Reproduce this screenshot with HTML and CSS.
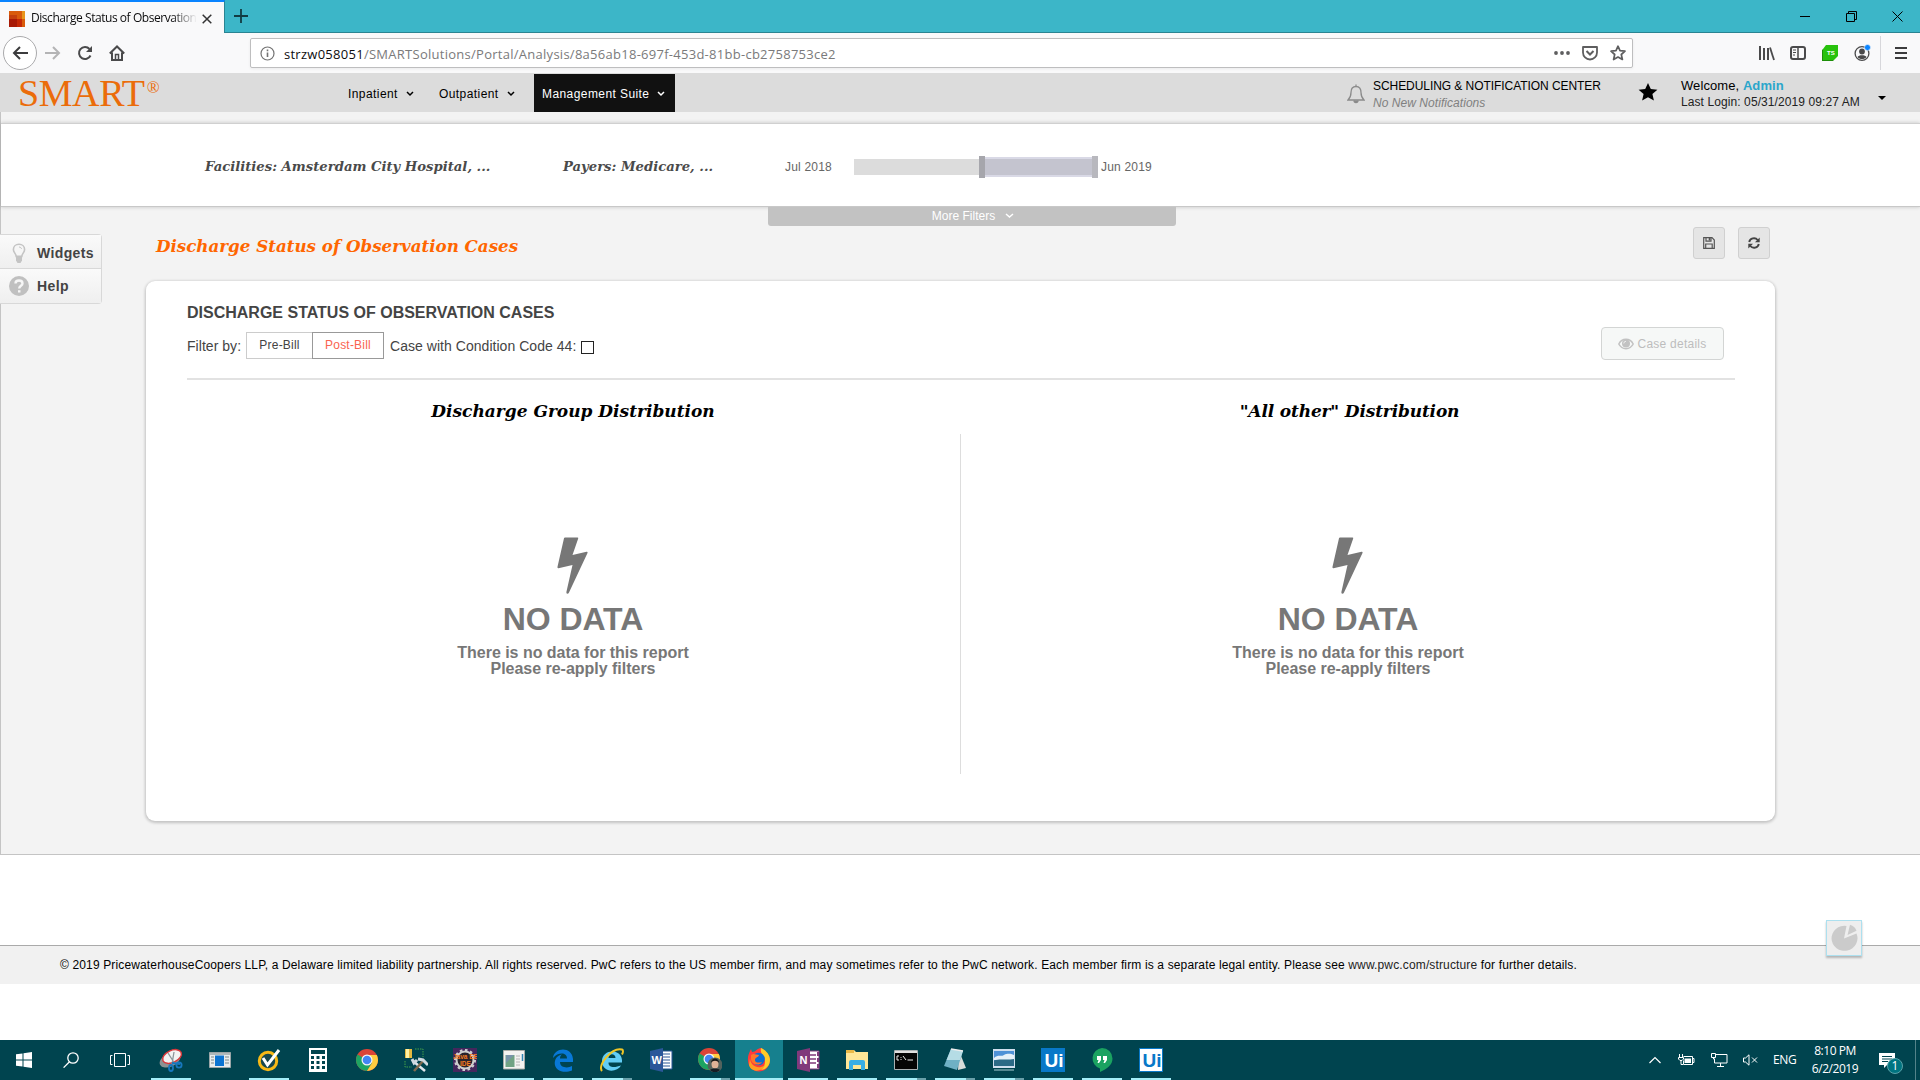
FILE: index.html
```html
<!DOCTYPE html>
<html lang="en">
<head>
<meta charset="utf-8">
<title>Discharge Status of Observation Cases</title>
<link rel="stylesheet" href="styles.css">
</head>
<body>
<header class="browser">
  <div class="tabstrip">
    <div class="tab">
      <svg class="favicon" width="16" height="16" viewBox="0 0 16 16"><path fill="#d95b0b" d="M0 0h16v16H0z"/><path fill="#e8941a" d="M13 0h3v8h-3z"/><path fill="#c5400c" d="M0 4h8v5H0z"/><path fill="#a81a06" d="M0 8h8v8H0z"/><path fill="#c42806" d="M8 8h5v8H8z"/></svg>
      <span class="tab-title">Discharge Status of Observation</span>
      <svg class="tab-close" width="10" height="10" viewBox="0 0 10 10"><path d="M.7.7l8.600 8.600M9.300.7L.7 9.300" stroke="#333" stroke-width="1.500"/></svg>
    </div>
    <svg class="tab-new" width="14" height="14" viewBox="0 0 14 14"><path d="M7 0v14M0 7h14" stroke="#123c42" stroke-width="1.800"/></svg>
    <div class="window-controls">
      <svg width="11" height="11" viewBox="0 0 11 11"><path d="M0 5.500h10" stroke="#000"/></svg>
      <svg width="11" height="11" viewBox="0 0 11 11" fill="none" stroke="#000"><path d="M.5 2.500h8v8h-8zM2.500 2V.5h8v8H9"/></svg>
      <svg width="11" height="11" viewBox="0 0 11 11"><path d="M.5.5l10 10M10.500.5l-10 10" stroke="#000"/></svg>
    </div>
  </div>
  <div class="toolbar">
    <div class="nav-buttons">
      <span class="back"><svg width="16" height="14" viewBox="0 0 16 14" fill="none" stroke="#3c3c3d" stroke-width="2"><path d="M16 7H2M8 1L2 7l6 6"/></svg></span>
      <svg width="16" height="14" viewBox="0 0 16 14" fill="none" stroke="#b4b4b5" stroke-width="2"><path d="M0 7h14M8 1l6 6-6 6"/></svg>
      <svg width="16" height="16" viewBox="0 0 16 16" fill="none" stroke="#4a4a4b" stroke-width="2"><path d="M13.500 10.500A6 6 0 1 1 12.500 4"/><path d="M15 1v6H9z" fill="#4a4a4b" stroke="none"/></svg>
      <svg width="16" height="16" viewBox="0 0 16 16" fill="none" stroke="#4a4a4b" stroke-width="2"><path d="M.8 8.500L8 1.500l7.200 7M3 7.500V15h10V7.500"/><path d="M6.500 15V9.500h3V15" stroke-width="1.500"/></svg>
    </div>
    <div class="urlbar">
      <svg width="15" height="15" viewBox="0 0 15 15" fill="none" stroke="#737373"><circle cx="7.500" cy="7.500" r="6.500" stroke-width="1.200"/><path d="M7.500 6.500V11M7.500 3.600v1.700" stroke-width="1.600"/></svg>
      <span class="url"><b>strzw058051</b>/SMARTSolutions/Portal/Analysis/8a56ab18-697f-453d-81bb-cb2758753ce2</span>
      <svg width="16" height="16" viewBox="0 0 16 16" fill="#5e5e5f"><circle cx="2" cy="8" r="1.900"/><circle cx="8" cy="8" r="1.900"/><circle cx="14" cy="8" r="1.900"/></svg>
      <svg width="16" height="16" viewBox="0 0 16 16" fill="none" stroke="#5e5e5f" stroke-width="1.800"><path d="M1 2h14v5.500a7 7 0 0 1-14 0z" stroke-linejoin="round"/><path d="M4.500 6L8 9.500 11.500 6" stroke-width="2"/></svg>
      <svg width="16" height="16" viewBox="0 0 16 16" fill="none" stroke="#5e5e5f" stroke-width="1.700"><path d="M8 1.200l2 4.500 5 .5-3.700 3.300 1.100 5L8 12l-4.400 2.500 1.100-5L1 6.200l5-.5z" stroke-linejoin="round"/></svg>
    </div>
    <div class="tools">
      <svg width="16" height="16" viewBox="0 0 16 16" fill="none" stroke="#4a4a4b" stroke-width="2"><path d="M1 1v14M5 3v12M9 3v12"/><path d="M11 2.500L15 15" stroke-width="1.800"/></svg>
      <svg width="16" height="16" viewBox="0 0 16 16" fill="none" stroke="#4a4a4b" stroke-width="2"><rect x="1" y="2" width="14" height="12" rx="2"/><path d="M8 2v12" stroke-width="1.500"/><path d="M3 5h3M3 7.500h3M3 10h2" stroke-width="1"/></svg>
      <svg width="16" height="16" viewBox="0 0 16 16"><path fill="#1d8f08" d="M0 4v12h12z"/><path fill="#28c20d" d="M4 0h12v11l-4 4H1V4z"/><text class="ts-mark" x="5" y="10" fill="#fff">TS</text></svg>
      <svg width="18" height="18" viewBox="0 0 18 18"><circle cx="8" cy="9.500" r="6.900" fill="none" stroke="#4a4a4b" stroke-width="1.300"/><circle cx="8" cy="7.500" r="2.900" fill="#4a4a4b"/><path fill="#4a4a4b" d="M3.500 13c1-2.500 8-2.500 9 0-2 2.800-7 2.800-9 0z"/><circle cx="13.500" cy="3.500" r="3" fill="#0a84ff" stroke="#f9f9fa" stroke-width=".6"/></svg>
      <i class="tool-sep"></i>
      <svg width="12" height="14" viewBox="0 0 12 14" stroke="#3c3c3d" stroke-width="2"><path d="M0 2h12M0 7h12M0 12h12"/></svg>
    </div>
  </div>
</header>

<div class="page">
  <header class="appbar">
    <div class="logo">SMART<sup>®</sup></div>
    <nav class="menu">
      <a class="m1">Inpatient <svg width="8" height="6" viewBox="0 0 8 6"><path d="M1 1l3 3 3-3"/></svg></a>
      <a class="m2">Outpatient <svg width="8" height="6" viewBox="0 0 8 6"><path d="M1 1l3 3 3-3"/></svg></a>
      <a class="m3 active">Management Suite <svg width="8" height="6" viewBox="0 0 8 6"><path d="M1 1l3 3 3-3"/></svg></a>
    </nav>
    <div class="notify">
      <svg width="18" height="20" viewBox="0 0 18 20" fill="none" stroke="#8a8a8a" stroke-width="1.300"><path d="M9 2.500c-3.500 0-5 2.500-5 6 0 4-1 5.500-3 7.500h16c-2-2-3-3.500-3-7.500 0-3.500-1.500-6-5-6zM9 .5v2"/><path d="M7 16.500a2 2 0 0 0 4 0" fill="#8a8a8a"/></svg>
      <div><p class="sched">SCHEDULING &amp; NOTIFICATION CENTER</p><p class="none">No New Notifications</p></div>
    </div>
    <svg class="star" width="20" height="18" viewBox="0 0 20 18"><path d="M10 0l2.800 6 6.600.7-5 4.400 1.500 6.500L10 14.300l-5.900 3.300 1.500-6.500-5-4.400L7.200 6z"/></svg>
    <div class="user"><p class="welcome">Welcome, <b>Admin</b></p><p class="last">Last Login: 05/31/2019 09:27 AM</p></div>
    <i class="caret"></i>
  </header>

  <section class="filters">
    <span class="facilities">Facilities: Amsterdam City Hospital, ...</span>
    <span class="payers">Payers: Medicare, ...</span>
    <span class="from">Jul 2018</span>
    <div class="range"><i class="track"></i><i class="handle left"></i><i class="selected"></i><i class="handle right"></i></div>
    <span class="to">Jun 2019</span>
  </section>
  <div class="more">More Filters <svg width="9" height="6" viewBox="0 0 9 6"><path d="M1 1l3.500 3L8 1"/></svg></div>

  <div class="workspace">
    <aside class="side">
      <a><svg width="20" height="20" viewBox="0 0 20 20"><path d="M10 1.200c-3.300 0-5.600 2.300-5.600 5.200 0 3 2.600 4.200 2.800 7h5.600c.2-2.800 2.800-4 2.800-7 0-2.900-2.300-5.200-5.600-5.200z" fill="#f6f6f6" stroke="#c4c4c4" stroke-width="1.600"/><path d="M7 13.500h6v4L11.500 20h-3L7 17.500z" fill="#c4c4c4"/><path d="M10 4c1.500 0 2.500 1 2.500 2" fill="none" stroke="#c4c4c4"/></svg>Widgets</a>
      <a><svg width="20" height="20" viewBox="0 0 20 20"><circle cx="10" cy="10" r="10" fill="#c0c0c0"/><path d="M6.500 7.500C6.500 3.500 13.500 3.500 13.500 7.500c0 2.300-3.300 2.300-3.300 5" fill="none" stroke="#f6f6f6" stroke-width="2.400"/><path d="M9 14.200h2.500v2.300H9z" fill="#f6f6f6"/></svg>Help</a>
    </aside>
    <main class="content">
      <div class="titlebar">
        <h1>Discharge Status of Observation Cases</h1>
        <button class="square"><svg width="12" height="12" viewBox="0 0 12 12" fill="none" stroke="#555" stroke-width="1.200"><path d="M.7.7h8.300l2.300 2.300v8.300H.7zM2.700 11V7h6.500v4M3 .7v3.500h5V.7"/><path d="M5.700 1h1.600v2.500H5.700z" fill="#555" stroke="none"/></svg></button>
        <button class="square"><svg width="12" height="12" viewBox="0 0 12 12" fill="none" stroke="#444" stroke-width="1.900"><path d="M1.200 5A4.800 4.600 0 0 1 9.700 3M10.800 7A4.800 4.600 0 0 1 2.300 9"/><path d="M11.700.5v4.700H7zM.3 11.500V6.800H5z" fill="#444" stroke="none"/></svg></button>
      </div>
      <section class="card">
        <h2>DISCHARGE STATUS OF OBSERVATION CASES</h2>
        <div class="controls">
          <span class="by">Filter by:</span>
          <button class="bill pre">Pre-Bill</button><button class="bill post">Post-Bill</button>
          <label>Case with Condition Code 44:</label><i class="check"></i>
          <button class="details"><svg width="16" height="12" viewBox="0 0 16 12"><path d="M.8 6C4-.2 12-.2 15.200 6 12 12.200 4 12.200.8 6z" fill="none" stroke="#c2c2c2" stroke-width="1.500"/><circle cx="8" cy="5.500" r="4" fill="#c2c2c2"/><path d="M5.800 5.500A2.200 2.200 0 0 1 8 3.300" stroke="#eee" fill="none"/></svg>Case details</button>
        </div>
        <div class="charts">
          <article>
            <h3 class="group">Discharge Group Distribution</h3>
            <div class="empty"><svg width="32" height="57" viewBox="0 0 32 57"><path d="M8 .5h12.500q1 0 .7 1L15.500 18l14-3.300q1.500-.2 1 1.200L12 55.500q-.6 1.200-1.600 1.200-1.400-.2-1-1.700L15.500 28 1.500 31.200q-1.400.2-1-1.400L7 1.300Q7.200.5 8 .5z"/></svg><strong>NO DATA</strong><p>There is no data for this report<br>Please re-apply filters</p></div>
          </article>
          <article>
            <h3 class="other">"All other" Distribution</h3>
            <div class="empty"><svg width="32" height="57" viewBox="0 0 32 57"><path d="M8 .5h12.500q1 0 .7 1L15.500 18l14-3.300q1.500-.2 1 1.200L12 55.500q-.6 1.200-1.600 1.200-1.400-.2-1-1.700L15.500 28 1.500 31.200q-1.400.2-1-1.400L7 1.300Q7.200.5 8 .5z"/></svg><strong>NO DATA</strong><p>There is no data for this report<br>Please re-apply filters</p></div>
          </article>
        </div>
      </section>
    </main>
  </div>
</div>
<footer class="legal">© 2019 PricewaterhouseCoopers LLP, a Delaware limited liability partnership. All rights reserved. PwC refers to the US member firm, and may sometimes refer to the PwC network. Each member firm is a separate legal entity. Please see <a>www.pwc.com/structure</a> for further details.
  <div class="pie"><svg width="28" height="28" viewBox="0 0 28 28"><path d="M14 14.500L16.500 2A13 12.500 0 1 0 26.500 9.500z" fill="#cbcbcb"/><path d="M17.500 11L20 .8q5 1.500 6.500 6z" fill="#cbcbcb"/></svg></div>
</footer>

<footer class="taskbar">
  <div class="system">
    <svg width="16" height="16" viewBox="0 0 16 16" fill="#fff"><path d="M0 2.300l6.500-.9v6.100H0zM7.500 1.200L16 0v7.500H7.500zM0 8.500h6.500v6.100L0 13.700zM7.500 8.500H16V16l-8.500-1.200z"/></svg>
    <svg width="16" height="16" viewBox="0 0 16 16" fill="none" stroke="#fff" stroke-width="1.300"><circle cx="10" cy="6" r="5.200"/><path d="M6.500 9.800L.6 15.600"/></svg>
    <svg width="20" height="14" viewBox="0 0 20 14" fill="none" stroke="#fff"><path d="M4.500.5h11v13h-11zM2.500 2.500h-2v9h2M17.500 2.500h2v9h-2"/></svg>
  </div>
  <div class="apps">
    <span class="app run"><svg viewBox="0 0 24 24"><ellipse cx="11" cy="12" rx="11" ry="6.500" transform="rotate(-25 11 12)" fill="#8b9292"/><ellipse cx="13" cy="8.500" rx="10" ry="6" transform="rotate(-25 13 8.500)" fill="#f2f2f2" stroke="#d7373a" stroke-width="1.500"/><path d="M9 5l7 11M15 4l-2 12" stroke="#8a9599" stroke-width="1.300"/><g fill="none" stroke="#1777bd" stroke-width="1.800"><path d="M13 15l8 1"/><ellipse cx="12" cy="20" rx="2" ry="3"/><circle cx="20" cy="17" r="2.600"/></g></svg></span>
    <span class="app"><svg viewBox="0 0 24 24"><path d="M1.500 4.500h21v15h-21z" fill="#e9ecec" stroke="#9aa5a7"/><path d="M2 5h20v2H2z" fill="#aeb8ba"/><path d="M7 7.500h9V18H7z" fill="#0c74d1"/><path d="M3 9h3M3 12h3M3 15h3M17 9h4M17 12h4M17 15h4" stroke="#7b898b"/></svg></span>
    <span class="app run"><svg viewBox="0 0 24 24"><circle cx="11" cy="13" r="8.700" fill="#17484e" stroke="#f8b916" stroke-width="3"/><path d="M6 10l4.500 7L22 2" fill="none" stroke="#fff" stroke-width="3"/></svg></span>
    <span class="app"><svg viewBox="0 0 24 24"><path d="M3 0h18v24H3z" fill="#fff"/><path d="M5 2h14v4H5z" fill="#00444e"/><path d="M5 9.500h14M5 14.500h14M5 19.500h14" stroke="#00444e" stroke-width="3" stroke-dasharray="3 2.500"/></svg></span>
    <span class="app"><svg viewBox="0 0 24 24"><circle cx="12" cy="12" r="11" fill="#db4437"/><path d="M12 12L2.500 6.500A11 11 0 0 0 12 23l5-8z" fill="#1da462"/><path d="M12 7h9.800A11 11 0 0 1 12 23l5-8z" fill="#ffcd40"/><circle cx="12" cy="12" r="5.500" fill="#f5f5f5"/><circle cx="12" cy="12" r="4.300" fill="#4285f4"/></svg></span>
    <span class="app run"><svg viewBox="0 0 24 24"><path d="M1 1h7v9H1z" fill="#e4b941"/><path d="M2 1h3v9H2z" fill="#fff1a3"/><path d="M11 1h8v8M1 13v6h7" fill="none" stroke="#42a04b" stroke-dasharray="1.500 1"/><path d="M9 13l12 10" stroke="#dfe7ec" stroke-width="2.500"/><path d="M10 23l9-10" stroke="#7f6a4e" stroke-width="2.500"/><path d="M8 11l2 4 3-3M14 11l5 1 5 5" fill="none" stroke="#cfdae0" stroke-width="3"/></svg></span>
    <span class="app run"><svg viewBox="0 0 24 24"><path d="M0 0h24v24H0z" fill="#44275d"/><circle cx="12" cy="12" r="8.500" fill="#29232b" stroke="#cfcfcf" stroke-width="2"/><circle cx="12" cy="12" r="10" fill="none" stroke="#cfcfcf" stroke-width="2" stroke-dasharray="2.600 2.600"/><text class="java" x="0" y="11">Java EE</text><text class="java" x="7" y="18">IDE</text></svg></span>
    <span class="app run"><svg viewBox="0 0 24 24"><path d="M1.500 2.500h21v18.500h-21z" fill="#f3f3f1" stroke="#a9aca8"/><path d="M3.500 7h9v12h-9z" fill="#71a384"/><path d="M4 7h8l-8 8z" fill="#7894aa"/><path d="M14 8h4M14 11h4M14 14h4M14 17h4" stroke="#b6b6b6"/><path d="M20.500 6v7" stroke="#3386b5" stroke-width="1.500"/></svg></span>
    <span class="app run"><svg viewBox="0 0 24 24"><path d="M2 10C3-1 21-2 22 11v3H9c0 6 8 6.500 12 4v4.500C11 26.500 2 21 4 13c1-4 4-6 7-6.500-1.500 1-2 2.500-2 4h7C16 4 7 4 2 10z" fill="#0878d6"/></svg></span>
    <span class="app run multi"><svg viewBox="0 0 24 24"><path fill-rule="evenodd" d="M2 13C2 1 21 0 22 12v2.500H8.500c0 6 7 5 12.500 3C17 25 2 25 2 13zM8.500 10h7c0-5-7-5-7 0z" fill="#62cdf5"/><path d="M2 23C-3 17 12-1 22 1.500q2 1 0 5" fill="none" stroke="#efc627" stroke-width="2"/></svg></span>
    <span class="app"><svg viewBox="0 0 24 24"><path d="M12 3h11v18H12z" fill="#fff" stroke="#2b5797"/><path d="M13 6h8M13 9h8M13 12h8M13 15h8M13 18h8" stroke="#2b5797"/><path d="M1 3l13-3v24L1 21z" fill="#2b579a"/><text class="office" x="2.500" y="16">W</text></svg></span>
    <span class="app run multi"><svg viewBox="0 0 24 24"><circle cx="11" cy="11" r="11" fill="#db4437"/><path d="M11 11L1.500 5.500A11 11 0 0 0 11 22l5-8z" fill="#1da462"/><path d="M11 6h9.800A11 11 0 0 1 11 22l5-8z" fill="#ffcd40"/><circle cx="11" cy="11" r="5.500" fill="#f5f5f5"/><circle cx="11" cy="11" r="4.300" fill="#4285f4"/><circle cx="17" cy="17" r="7.500" fill="#53625d"/><ellipse cx="17" cy="16" rx="3.500" ry="4.500" fill="#dfb297"/><path d="M13 15c0-6 8-6 8 0-2-3-6-3-8 0z" fill="#191919"/><path d="M12 22c2-2 8-2 10 0-3 3-7 3-10 0z" fill="#151d24"/></svg></span>
    <span class="app run active"><svg viewBox="0 0 24 24"><path d="M5 4c4 0 5-4 9-4 4 2 9 7 9 12a11 11 0 0 1-22 1C.500 8 2 5 4 1z" fill="#ff3b3c"/><path d="M14 0c5 2 9 7 9 12 0 6-5 10-9 10 4-4 5-8 3-13-2-3-4-5-3-9z" fill="#ffcb28"/><path d="M3 10c0 8 9 12 15 7-2 7-14 8-16 0z" fill="#ff9e21"/><circle cx="11.500" cy="11" r="6.300" fill="#0b6fd1"/><path d="M4 7c3-2 5 0 8 0-1 3-4 2-4 5s4 3 7 2c-3 5-11 2-11-3z" fill="#ff7528"/></svg></span>
    <span class="app run"><svg viewBox="0 0 24 24"><path d="M12 3h11v18H12z" fill="#fff" stroke="#80397b"/><path d="M14 7h6M14 11h6M14 15h6" stroke="#80397b" stroke-width="1.500"/><path d="M22 4v4M22 10v4M22 16v4" stroke="#80397b" stroke-width="2"/><path d="M1 3l13-3v24L1 21z" fill="#80397b"/><text class="office" x="3.500" y="16">N</text></svg></span>
    <span class="app run"><svg viewBox="0 0 24 24"><path d="M1 2h8l2 2h12v17H1z" fill="#ffe797"/><path d="M1 2h8v3H1z" fill="#eab946"/><path d="M4 22v-8q0-2 2-2h12q2 0 2 2v8h-4v-5H8v5z" fill="#39aee4"/></svg></span>
    <span class="app run multi"><svg viewBox="0 0 24 24"><path d="M.5 2.500h23v19H.5z" fill="#050505" stroke="#a9b0b2"/><path d="M1 3h22v2H1z" fill="#e0e0e0"/><path d="M5 8H3v4h2M7 9v.8M7 11v1M9 8l3 4M13.500 12H19" stroke="#eee" fill="none"/></svg></span>
    <span class="app run multi"><svg viewBox="0 0 24 24"><path d="M16 3l7 17-8 2z" fill="#d9dcda"/><path d="M8 1l12 2-6 19-13-4z" fill="#6fb0c4"/><path d="M8 1l12 2-3 9L3.500 12z" fill="#b5dce5"/><path d="M8 1l12 2" stroke="#eee" stroke-width="1.500"/></svg></span>
    <span class="app run multi"><svg viewBox="0 0 24 24"><path d="M1 1h22v19H1z" fill="#cfdfee"/><path d="M2 3h20v15H2z" fill="#4f92d6"/><path d="M2 10c4-4 7-1 10-3 4-2 7-1 10 0v5H2z" fill="#e6f1f8"/><path d="M2 12.500c6-2 12 0 20-1.500v7H2z" fill="#2b6a86"/><path d="M2 22h20" stroke="#8fb9c0" stroke-width="1.200"/></svg></span>
    <span class="app run"><svg viewBox="0 0 24 24"><path d="M0 0h24v24H0z" fill="#0878c8"/><text class="ui" x="3.500" y="19" fill="#fff">Ui</text></svg></span>
    <span class="app run"><svg viewBox="0 0 24 24"><path d="M12 0a10.500 10.500 0 0 0-2 20.500V24c7-3 12.500-7 12.500-13.500A10.500 10.500 0 0 0 12 0z" fill="#1ba261"/><path d="M7 8h4v4l-2 3H7.500l1-3H7zM13 8h4v4l-2 3h-1.500l1-3H13z" fill="#fff"/></svg></span>
    <span class="app run"><svg viewBox="0 0 24 24"><path d="M.5.5h23v23H.5z" fill="#fff" stroke="#0878c8"/><text class="ui" x="3.500" y="19" fill="#0878c8">Ui</text></svg></span>
  </div>
  <div class="tray">
    <svg width="12" height="8" viewBox="0 0 12 8" fill="none" stroke="#fff" stroke-width="1.200"><path d="M.5 7L6 1.500 11.500 7"/></svg>
    <svg width="17" height="12" viewBox="0 0 17 12" fill="none" stroke="#fff"><path d="M5.500 2.500h9v8h-9v-4M14.500 4.500h1.500v4h-1.500"/><path d="M6.500 4.500H13V9H6.500z" fill="#fff" stroke="none"/><path d="M1.500 0v3M4.500 0v3M.5 3.500h5V5L4 6.500H2L.5 5zM3 6.500v4h2"/></svg>
    <svg width="17" height="14" viewBox="0 0 17 14" fill="none" stroke="#fff"><path d="M5 1.500h11v8.500H3.500V6M.5.5h4v4h-4zM2.500 4.500V6H4M9.500 10v3M6 13.500h7"/></svg>
    <svg width="15" height="12" viewBox="0 0 15 12" fill="none" stroke="#fff"><path d="M.5 4h2L6 .8v10.400L2.500 8h-2zM9 3.500l5 5M14 3.500l-5 5"/></svg>
    <span class="lang">ENG</span>
    <div class="clock"><span>8:10 PM</span><span>6/2/2019</span></div>
    <div class="action"><svg width="16" height="15" viewBox="0 0 16 15"><path d="M0 0h16v12H8l-3 3v-3H0z" fill="#fff"/><path d="M3 3.500h10M3 6h10M3 8.500h6" stroke="#00444e"/></svg><span class="count">1</span></div>
    <i class="peek"></i>
  </div>
</footer>
</body>
</html>
```
FILE: styles.css
```css
* { box-sizing: border-box; }
body { margin: 0; width: 1920px; height: 1080px; overflow: hidden; background: #fff; color: #444; font: 12px/16px "Liberation Sans", Arial, sans-serif; display: flex; flex-direction: column; }
p, h1, h2, h3 { margin: 0; }
button { font: inherit; padding: 0; margin: 0; }
svg { flex: none; display: block; }

/* Browser window */
.browser { flex: none; height: 73px; font-family: "Open Sans", "Noto Sans", sans-serif; }
.tabstrip { height: 33px; display: flex; align-items: center; background: #3cb6c8; border-bottom: 1px solid #2a8492; }
.tab { width: 225px; height: 33px; margin-bottom: -1px; padding: 2px 0 0 9px; display: flex; align-items: center; background: #f9f9fa; border-top: 2px solid #0a84ff; border-right: 1px solid #2a8492; }
.tab-title { width: 166px; margin-left: 6px; padding-bottom: 1px; white-space: nowrap; font-size: 12px; letter-spacing: -.45px; color: #0c0c0d; -webkit-mask-image: linear-gradient(to right, #000 85%, transparent); mask-image: linear-gradient(to right, #000 85%, transparent); }
.tab-close { margin-left: 5px; }
.tab-new { margin-left: 9px; }
.window-controls { margin-left: auto; padding-right: 17px; display: flex; gap: 35px; }
.toolbar { height: 40px; display: flex; align-items: center; background: #f9f9fa; }
.nav-buttons { width: 250px; padding-left: 3px; display: flex; align-items: center; }
.nav-buttons svg { margin-right: 16px; }
.back { width: 34px; height: 34px; border: 1px solid #aaaaac; border-radius: 50%; background: #fff; display: flex; align-items: center; justify-content: center; margin-right: 8px; }
.nav-buttons .back svg { margin: 0; }
.urlbar { width: 1383px; height: 30px; padding: 0 6px 0 9px; display: flex; align-items: center; gap: 12px; background: #fff; border: 1px solid #bebebf; border-radius: 2px; box-shadow: 0 1px 3px rgba(0,0,0,.06); }
.url { flex: 1; margin-left: -3px; padding-top: 1px; font-size: 13px; letter-spacing: .27px; color: #7a7a7b; white-space: nowrap; }
.url b { font-weight: 400; color: #0c0c0d; }
.tools { margin-left: auto; padding-right: 13px; display: flex; align-items: center; }
.tools > svg:not(:last-child) { margin-right: 15.500px; }
.tools > svg:nth-child(3) { margin-right: 16px; }
.tool-sep { width: 1px; height: 34px; margin: 0 14px 0 -7px; background: #d7d7db; }
.ts-mark { font: bold 6px "Liberation Sans", sans-serif; }

/* Application page */
.page { flex: none; height: 782px; display: flex; flex-direction: column; background: #f3f3f3; border-left: 1px solid #c4c4c4; border-bottom: 1px solid #c4c4c4; }
.appbar { flex: none; height: 39px; margin-left: -1px; display: flex; align-items: center; background: #dcdcdc; white-space: nowrap; color: #000; }
.logo { width: 340px; padding-left: 18px; font: 38px/38px "Liberation Serif", serif; letter-spacing: -.4px; color: #eb6c0a; display: flex; }
.logo sup { font-size: 17px; line-height: 27px; margin-left: 2px; }
.menu { align-self: stretch; display: flex; letter-spacing: .42px; }
.menu a { display: flex; align-items: center; gap: 8px; padding: 2px 0 0 8px; }
.menu svg, .more svg { fill: none; stroke: currentColor; stroke-width: 1.500; }
.m1 { width: 91px; }
.m2 { width: 95px; }
.m3 { width: 141px; }
.menu .active { margin-top: 1px; margin-left: 8px; padding-top: 1px; background: #111; color: #fff; }
.notify { margin-left: 672px; width: 291px; display: flex; align-items: center; gap: 8px; padding-top: 3px; }
.notify p { line-height: 17px; }
.notify div { margin-top: 2px; }
.sched { letter-spacing: -.06px; }
.none { font-style: italic; color: #808080; letter-spacing: .05px; }
.star { margin-bottom: 1px; }
.user { width: 196px; margin-left: 23px; padding-top: 4px; line-height: 17px; }
.welcome { font-size: 13px; letter-spacing: .08px; margin-top: -1px; }
.welcome b { color: #2ba6cb; }
.last { letter-spacing: .09px; color: #222; }
.caret { margin: 11px 0 0 1px; border: 4px solid transparent; border-top-color: #000; border-bottom: 0; }

.filters { flex: none; height: 84px; margin-top: 11px; padding-left: 204px; display: flex; align-items: center; background: #fff; border-top: 1px solid #d0d0d0; border-bottom: 1px solid #c8c8c8; box-shadow: 0 0 4px rgba(0,0,0,.2); white-space: nowrap; color: #666; letter-spacing: .2px; padding-top: 4px; }
.facilities, .payers { font: italic bold 13.200px/20px "DejaVu Serif", Georgia, serif; letter-spacing: 0; color: #4a4a4a; padding-bottom: 1px; }
.facilities { width: 358px; }
.payers { width: 222px; }
.from { width: 69px; }
.range { width: 244px; display: flex; align-items: center; margin-right: 3px; }
.track { width: 125px; height: 16px; background: #dcdcdc; }
.handle { width: 6px; height: 22px; background: #b8b8be; }
.handle.left { background: #a6a6ac; }
.selected { width: 107px; height: 20px; background: #c4c4cf; border: solid #d9d9e6; border-width: 2px 0; }
.more { flex: none; width: 408px; height: 19px; padding: 0 0 2px 2px; margin-left: 767px; display: flex; align-items: center; justify-content: center; gap: 10px; background: #c2c2c2; border-radius: 0 0 3px 3px; color: #fff; }

.workspace { flex: 1; display: flex; align-items: flex-start; }
.side { width: 102px; margin: 8px 43px 0 -1px; border: 1px solid #d8d8d8; border-left: 0; border-radius: 0 4px 4px 0; }
.side a { height: 33px; padding: 2px 0 0 9px; display: flex; align-items: center; gap: 8px; font: bold 14px/18px "Liberation Sans", sans-serif; letter-spacing: .38px; background: linear-gradient(#fafafa, #efefef); }
.side a + a { height: 35px; padding-top: 0; border-top: 1px solid #d8d8d8; }
.content { width: 1630px; }
.titlebar { height: 55px; padding: 1px 5px 0 11px; display: flex; align-items: flex-start; gap: 13px; }
h1, h3 { font: italic bold 16.700px/24px "DejaVu Serif", Georgia, serif; }
h1 { flex: 1; padding-top: 7px; color: #ff6600; }
.square { width: 32px; height: 32px; display: flex; align-items: center; justify-content: center; background: #e5e5e5; border: 1px solid #d0d0d0; border-radius: 3px; }
.card { height: 540px; margin: 0 0 0 1px; padding: 21px 40px 0 41px; background: #fff; border-radius: 9px; box-shadow: 0 1px 3px 1px rgba(0,0,0,.2); }
h2 { font: bold 16px/22px "Liberation Sans", sans-serif; }
.controls { height: 56px; padding-top: 8px; display: flex; align-items: flex-start; border-bottom: 2px solid #e2e2e2; font-size: 14px; }
.by, .controls label { line-height: 28px; letter-spacing: .04px; }
.by { width: 59px; }
.bill { height: 27px; padding-bottom: 1px; font-size: 12px; letter-spacing: .2px; background: #fff; color: #444; border: 1px solid #ccc; }
.pre { width: 66px; border-right: 0; }
.post { width: 72px; color: #fa6450; border-color: #999; }
.controls label { margin-left: 6px; }
.check { width: 13px; height: 13px; margin: 9px 0 0 5px; border: 1px solid #222; background: #fff; }
.details { width: 123px; height: 33px; margin: -5px 11px 0 auto; display: flex; align-items: center; justify-content: center; gap: 3px; color: #bdbdbd; background: #f6f8f7; border: 1px solid #d3d5d4; border-radius: 4px; letter-spacing: .25px; font-size: 12px; }
.charts { display: flex; height: 394px; }
.charts article { flex: none; width: 774px; height: 394px; display: flex; flex-direction: column; align-items: center; text-align: center; }
.charts article:last-child { width: 775px; }
h3 { font-size: 17px; color: #000; padding-top: 19px; }
.group { margin-right: 2px; }
.other { letter-spacing: -.15px; margin-left: 2px; }
.empty { align-self: stretch; flex: 1; margin-top: 11px; padding: 103px 1px 0 0; display: flex; flex-direction: column; align-items: center; color: #777; }
.charts article:first-child .empty { border-right: 1px solid #ddd; }
.empty svg { fill: #777; }
.empty strong { font-size: 32px; line-height: 36px; margin-top: 7px; letter-spacing: -.1px; }
.empty p { font: bold 16px/16px "Liberation Sans", sans-serif; margin-top: 8px; letter-spacing: -.02px; }

.legal { position: relative; flex: none; height: 39px; margin-top: 90px; padding: 11px 0 0 60px; background: #f1f1f1; border-top: 1px solid #aaa; color: #000; letter-spacing: .141px; white-space: nowrap; }
.legal a { color: #222; }
.pie { position: absolute; left: 1826px; top: -26px; width: 36px; height: 36px; padding: 3px; background: #eee; border: 1px solid #ade0ef; box-shadow: 0 2px 2px rgba(0,0,0,.25); }

/* Desktop taskbar */
.taskbar { flex: none; height: 40px; margin-top: 56px; display: flex; background: #00444f; color: #fff; font-family: "Open Sans", "Noto Sans", sans-serif; }
.system { width: 147px; padding-left: 16px; display: flex; align-items: center; gap: 31px; }
.apps { display: flex; gap: 1px; }
.app { width: 48px; height: 40px; padding-top: 8px; display: grid; grid-template-rows: 30px 2px; justify-items: center; }
.app svg { width: 24px; height: 24px; }
.run::after { content: ""; width: 40px; height: 2px; background: #a4eef8; }
.multi::after { background: linear-gradient(to right, #a4eef8 31px, #69a0aa 31px); }
.app.active { background: #16808e; }
.active.run::after { width: 48px; }
.office { font: bold 11px "Liberation Sans", sans-serif; fill: #fff; }
.java { font: bold 6.500px "Liberation Sans", sans-serif; fill: #f47b20; }
.ui { font: bold 19px "Liberation Sans", sans-serif; }
.tray { margin-left: auto; display: flex; align-items: center; }
.tray > svg { margin-right: 16px; }
.tray > svg:nth-child(1) { margin-right: 17px; }
.tray > svg:nth-child(3) { margin-right: 15px; }
.tray > svg:nth-child(4) { margin-right: 15px; }
.lang { width: 39px; letter-spacing: -.4px; }
.clock { width: 46px; display: flex; flex-direction: column; align-items: center; line-height: 18px; letter-spacing: -.45px; white-space: nowrap; }
.action { position: relative; width: 36px; margin-left: 21px; }
.count { position: absolute; left: 8px; top: 5px; width: 16px; height: 16px; border: 1px solid #5aa3aa; border-radius: 50%; background: #007480; text-align: center; line-height: 14px; }
.peek { width: 5px; height: 40px; border-left: 1px solid #53838a; }
```
